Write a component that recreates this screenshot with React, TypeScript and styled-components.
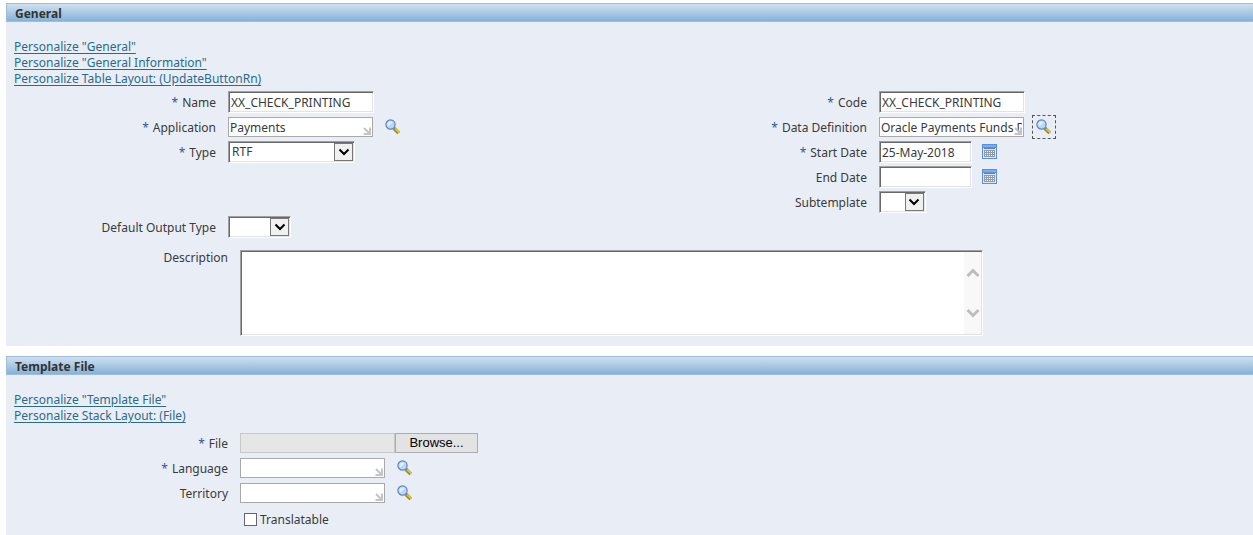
import React, { useId, useRef } from "react";
import styled, { createGlobalStyle, css } from "styled-components";

const GlobalStyle = createGlobalStyle`
  *, *::before, *::after { box-sizing: border-box; }
  body {
    margin: 0;
    background: #fff;
    color: #3a3a3a;
    font-family: "Noto Sans", Tahoma, sans-serif;
    font-size: 12px;
    line-height: 16px;
  }
  input, select, textarea, button { font: inherit; color: inherit; margin: 0; }
`;

const Page = styled.main`
  display: flex;
  flex-direction: column;
  gap: 10px;
  padding: 3px 0 0 6px;
`;

const Section = styled.section`
  background: #e9eef6;
  padding-bottom: 4px;
`;

const SectionTitle = styled.h2`
  margin: 0;
  height: 19px;
  padding-left: 8px;
  border: solid #9dbddb;
  border-width: 1px 0 1px 1px;
  background: linear-gradient(#cfe0f0, #86b2d9);
  font-size: 12px;
  line-height: 19px;
  font-weight: 700;
  color: #333;
`;

const Links = styled.nav`
  display: flex;
  flex-direction: column;
  align-items: flex-start;
  padding: 17px 8px 0;
`;

const PersonalizeLink = styled.a`
  color: #2b6b8a;
  text-decoration: underline;
  text-underline-offset: 2px;
`;

const Columns = styled.div`
  display: grid;
  grid-template-columns: 52.2% 1fr;
  padding-top: 2px;
`;

const Stack = styled.div`
  display: flex;
  flex-direction: column;
`;

const FileStack = styled(Stack)`
  padding: 6px 0 1px;
`;

const Row = styled.div<{ $wide?: boolean; $top?: boolean }>`
  display: grid;
  grid-template-columns: ${(p) => (p.$wide ? 222 : 210)}px 1fr;
  column-gap: 12px;
  align-items: ${(p) => (p.$top ? "start" : "center")};
  min-height: 25px;
`;

const Label = styled.label<{ $top?: boolean }>`
  padding-top: ${(p) => (p.$top ? 0 : 2)}px;
  text-align: right;
  white-space: nowrap;
`;

const Star = styled.span`
  color: #2d5a96;
  margin-right: 4px;
`;

const Controls = styled.div`
  display: flex;
  align-items: center;
`;

const sunken = css`
  border: 1px solid;
  border-color: #a0a0a0 #fff #fff #a0a0a0;
  border-radius: 0;
  background: #fff;
  outline: none;
  box-shadow: inset 1px 1px #696969, inset -1px -1px #e3e3e3;
`;

const TextInput = styled.input<{ $short?: boolean }>`
  ${sunken}
  width: ${(p) => (p.$short ? 93 : 146)}px;
  height: 22px;
  padding: 2px 2px 0;
`;

const LovBox = styled.div`
  position: relative;
  display: flex;
  width: 145px;
`;

const LovInput = styled.input`
  width: 100%;
  height: 20px;
  padding: 1px 1px 0;
  border: 1px solid #a9a9a9;
  background: #fff;
  outline: none;
`;

const LovCorner = styled.svg`
  position: absolute;
  right: 2px;
  bottom: 2px;
  pointer-events: none;
`;

const IconButton = styled.button<{ $focused?: boolean }>`
  display: flex;
  align-items: center;
  justify-content: center;
  width: 24px;
  height: 24px;
  margin-left: 8px;
  padding: 0;
  background: none;
  border: 1px ${(p) => (p.$focused ? "dashed #555" : "solid transparent")};
`;

const CalendarButton = styled(IconButton)`
  margin-left: 6px;
`;

const SelectBox = styled.div<{ $width: number }>`
  position: relative;
  display: flex;
  width: ${(p) => p.$width}px;
`;

const Select = styled.select`
  ${sunken}
  appearance: none;
  width: 100%;
  height: 22px;
  padding: 0 20px 0 3px;
`;

const SelectArrow = styled.span`
  position: absolute;
  top: 2px;
  right: 2px;
  bottom: 2px;
  width: 19px;
  display: flex;
  align-items: center;
  justify-content: center;
  border: 1px solid #777;
  background: #f0f0f0;
  pointer-events: none;
`;

const DescriptionWrap = styled.div`
  padding: 11px 0 6px;
`;

const DescriptionBox = styled.div`
  position: relative;
  display: flex;
  width: 743px;
  max-width: 100%;
`;

const TextArea = styled.textarea`
  ${sunken}
  width: 100%;
  height: 86px;
  resize: none;
  overflow: hidden;
  padding: 2px 20px 2px 3px;
`;

const ScrollTrack = styled.div`
  position: absolute;
  top: 2px;
  right: 2px;
  bottom: 2px;
  width: 17px;
  display: flex;
  flex-direction: column;
  justify-content: space-between;
  align-items: center;
  padding: 16px 0;
  background: #f8f8f8;
`;

const FileName = styled.input`
  width: 155px;
  height: 20px;
  border: 1px solid #c8c8c8;
  background: #e6e6e6;
  outline: none;
`;

const Browse = styled.button`
  width: 83px;
  height: 20px;
  padding: 0;
  border: 1px solid #adadad;
  background: #e3e3e3;
  color: #000;
  font-family: "Liberation Sans", Arial, sans-serif;
  font-size: 13px;
  line-height: 18px;
`;

const CheckLabel = styled.label`
  display: flex;
  align-items: center;
  gap: 3px;
  padding: 4px 0 0 4px;
`;

const Checkbox = styled.input`
  appearance: none;
  width: 13px;
  height: 13px;
  border: 1px solid #666;
  background: #fff;

  &:checked { background: #666; box-shadow: inset 0 0 0 2px #fff; }
`;

const Magnifier = () => (
  <svg width="16" height="16" viewBox="0 0 16 16" aria-hidden="true">
    <path d="M9 9.4 13.8 14" stroke="#9a8c2c" strokeWidth="3.8" />
    <path d="M9.6 9 14.4 13.4" stroke="#dcc63a" strokeWidth="2" />
    <path d="M8.4 8.4 10 10" stroke="#7f8a9c" strokeWidth="2" />
    <circle cx="5.5" cy="5.5" r="4.6" fill="#b4d9fb" stroke="#6682b0" strokeWidth="1.2" />
    <path d="M2.5 6A3 3 0 0 1 6 2.5L7.5 3.5 3.5 7.5Z" fill="#dff0ff" />
  </svg>
);

const Calendar = () => (
  <svg width="15" height="15" viewBox="0 0 15 15" shapeRendering="crispEdges" aria-hidden="true">
    <rect width="15" height="15" rx="1" fill="#5c8fe0" />
    <rect x="1" y="1" width="13" height="2" fill="#7eabf0" />
    <rect x="1" y="4" width="13" height="10" fill="#dbe8fa" />
    <rect x="2" y="4" width="11" height="1" fill="#4f82d4" />
    <rect x="2" y="6" width="11" height="7" fill="#929cab" />
    <path d="M3 7.5h9M3 9.5h9M3 11.5h9" stroke="#f4f7fb" strokeDasharray="1 1" />
  </svg>
);

const Corner = () => (
  <LovCorner width="8" height="8" viewBox="0 0 8 8" aria-hidden="true">
    <path d="M1 1 6 6M7 0.5V7H0.5" fill="none" stroke="#c4c4c4" strokeWidth="2" />
  </LovCorner>
);

const Chevron = ({ up = false }: { up?: boolean }) => (
  <svg width="14" height="10" viewBox="0 0 14 10" aria-hidden="true">
    <path d={up ? "M1.5 8 7 2.5 12.5 8" : "M1.5 2 7 7.5 12.5 2"} fill="none" stroke="#bdbdbd" strokeWidth="3" />
  </svg>
);

type FieldProps = {
  label: string;
  required?: boolean;
  wide?: boolean;
  top?: boolean;
  children: (id: string) => React.ReactNode;
};

const Field = ({ label, required, wide, top, children }: FieldProps) => {
  const id = useId();
  return (
    <Row $wide={wide} $top={top}>
      <Label htmlFor={id} $top={top}>
        {required && <Star>*</Star>}
        {label}
      </Label>
      <Controls>{children(id)}</Controls>
    </Row>
  );
};

const Lov = ({ id, value = "", name, focused }: { id: string; value?: string; name: string; focused?: boolean }) => (
  <>
    <LovBox>
      <LovInput id={id} defaultValue={value} />
      <Corner />
    </LovBox>
    <IconButton type="button" $focused={focused} aria-label={`Search for ${name}`}>
      <Magnifier />
    </IconButton>
  </>
);

const DateInput = ({ id, value = "", name }: { id: string; value?: string; name: string }) => (
  <>
    <TextInput id={id} $short defaultValue={value} />
    <CalendarButton type="button" aria-label={`Pick ${name}`}>
      <Calendar />
    </CalendarButton>
  </>
);

const DropDown = ({ id, width, options }: { id: string; width: number; options: string[] }) => (
  <SelectBox $width={width}>
    <Select id={id}>
      {options.map((o) => (
        <option key={o}>{o}</option>
      ))}
    </Select>
    <SelectArrow>
      <svg width="12" height="8" viewBox="0 0 12 8" aria-hidden="true">
        <path d="M1.5 1.5 6 6 10.5 1.5" fill="none" stroke="#000" strokeWidth="2" />
      </svg>
    </SelectArrow>
  </SelectBox>
);

const LinkList = ({ items }: { items: string[] }) => (
  <Links>
    {items.map((t) => (
      <PersonalizeLink key={t} href="#">
        {t}
      </PersonalizeLink>
    ))}
  </Links>
);

export default function App() {
  const picker = useRef<HTMLInputElement>(null);
  return (
    <>
      <GlobalStyle />
      <Page>
        <Section>
          <SectionTitle>General</SectionTitle>
          <LinkList
            items={[
              'Personalize "General"',
              'Personalize "General Information"',
              "Personalize Table Layout: (UpdateButtonRn)",
            ]}
          />
          <Columns>
            <Stack>
              <Field label="Name" required>
                {(id) => <TextInput id={id} defaultValue="XX_CHECK_PRINTING" />}
              </Field>
              <Field label="Application" required>
                {(id) => <Lov id={id} value="Payments" name="application" />}
              </Field>
              <Field label="Type" required>
                {(id) => <DropDown id={id} width={127} options={["RTF"]} />}
              </Field>
            </Stack>
            <Stack>
              <Field label="Code" required>
                {(id) => <TextInput id={id} defaultValue="XX_CHECK_PRINTING" />}
              </Field>
              <Field label="Data Definition" required>
                {(id) => <Lov id={id} value="Oracle Payments Funds Disbursement" name="data definition" focused />}
              </Field>
              <Field label="Start Date" required>
                {(id) => <DateInput id={id} value="25-May-2018" name="start date" />}
              </Field>
              <Field label="End Date">{(id) => <DateInput id={id} name="end date" />}</Field>
              <Field label="Subtemplate">{(id) => <DropDown id={id} width={47} options={[""]} />}</Field>
            </Stack>
          </Columns>
          <Field label="Default Output Type">
            {(id) => <DropDown id={id} width={63} options={[""]} />}
          </Field>
          <DescriptionWrap>
            <Field label="Description" wide top>
              {(id) => (
                <DescriptionBox>
                  <TextArea id={id} />
                  <ScrollTrack>
                    <Chevron up />
                    <Chevron />
                  </ScrollTrack>
                </DescriptionBox>
              )}
            </Field>
          </DescriptionWrap>
        </Section>

        <Section>
          <SectionTitle>Template File</SectionTitle>
          <LinkList items={['Personalize "Template File"', "Personalize Stack Layout: (File)"]} />
          <FileStack>
            <Field label="File" required wide>
              {(id) => (
                <>
                  <FileName id={id} readOnly />
                  <Browse type="button" onClick={() => picker.current?.click()}>
                    Browse...
                  </Browse>
                  <input ref={picker} type="file" hidden aria-label="Template file" />
                </>
              )}
            </Field>
            <Field label="Language" required wide>
              {(id) => <Lov id={id} name="language" />}
            </Field>
            <Field label="Territory" wide>
              {(id) => <Lov id={id} name="territory" />}
            </Field>
            <Row $wide>
              <span />
              <CheckLabel>
                <Checkbox type="checkbox" />
                Translatable
              </CheckLabel>
            </Row>
          </FileStack>
        </Section>
      </Page>
    </>
  );
}
